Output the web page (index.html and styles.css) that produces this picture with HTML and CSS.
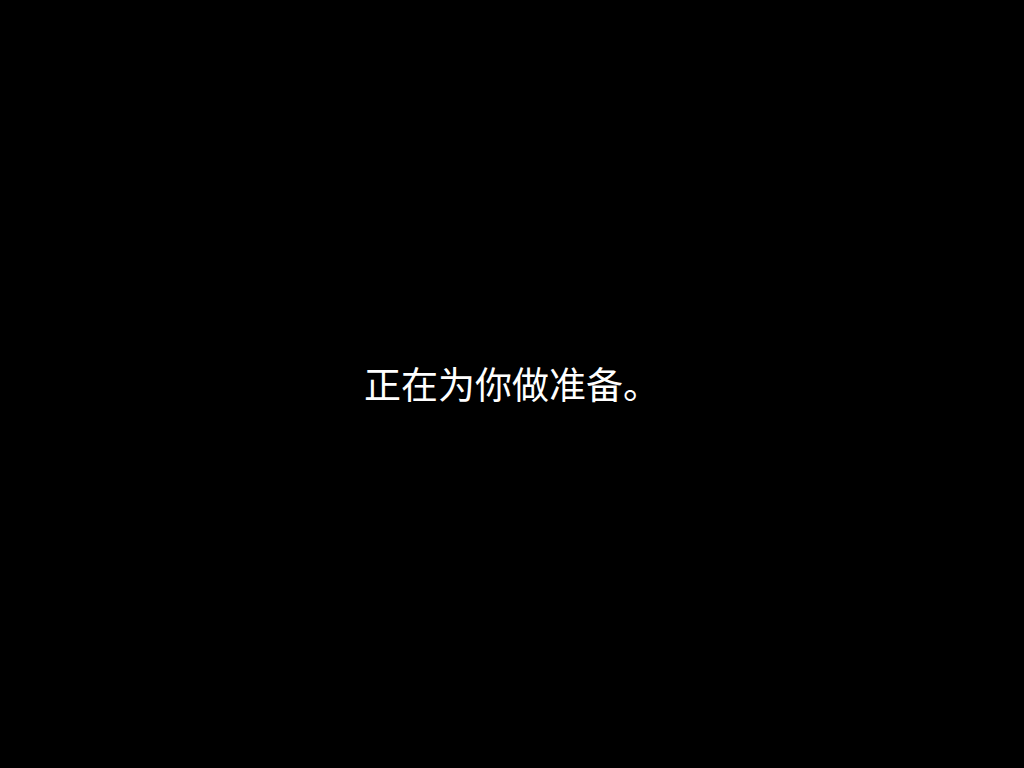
FILE: index.html
```html
<!DOCTYPE html>
<html lang="zh-CN">
<head>
<meta charset="utf-8">
<link rel="stylesheet" href="styles.css">
</head>
<body>
<main class="screen">
  <p class="message">正在为你做准备。</p>
</main>
</body>
</html>
```

FILE: styles.css
```css
html, body {
  margin: 0;
  padding: 0;
  background: #000;
}
.screen {
  width: 1024px;
  height: 768px;
  display: flex;
  align-items: center;
  justify-content: center;
}
.message {
  margin: 0;
  color: #fff;
  font-family: "Noto Sans CJK SC", sans-serif;
  font-size: 37px;
  line-height: 1;
  font-weight: 400;
  padding-bottom: 2px;
}
```
